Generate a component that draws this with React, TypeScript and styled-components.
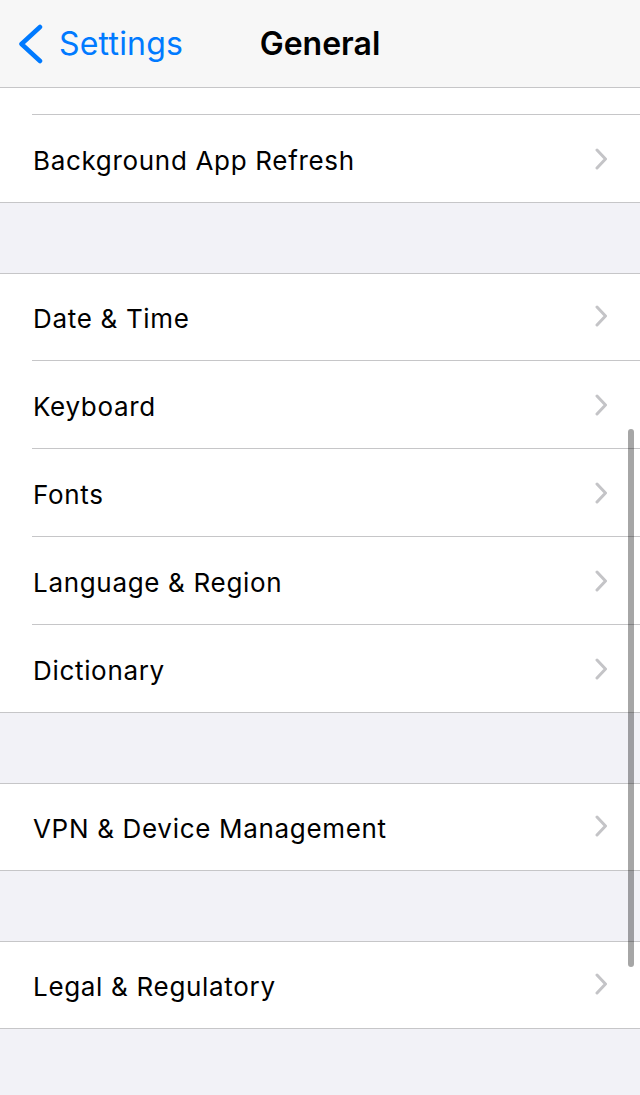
import React from "react";
import styled, { createGlobalStyle } from "styled-components";

const Global = createGlobalStyle`
  html, body { margin: 0; padding: 0; background: #f2f2f7; }
  body { font-family: Inter, "Open Sans", "Liberation Sans", sans-serif; -webkit-font-smoothing: antialiased; }
  * { box-sizing: border-box; }
`;

const Screen = styled.div`
  position: relative;
  width: 640px;
  height: 1095px;
  overflow: hidden;
  background: #f2f2f7;
  display: flex;
  flex-direction: column;
`;

const NavBar = styled.header`
  position: relative;
  height: 88px;
  flex: 0 0 88px;
  background: #f7f7f7;
  border-bottom: 1px solid #c6c6c8;
  display: flex;
  align-items: center;
`;

const BackButton = styled.div`
  display: flex;
  align-items: center;
  gap: 15px;
  padding-left: 17px;
  color: #007aff;
  font-size: 32px;
  letter-spacing: 0.2px;
`;

const Title = styled.h1`
  position: absolute;
  left: 0;
  right: 0;
  top: 0;
  bottom: 0;
  margin: 0;
  display: flex;
  align-items: center;
  justify-content: center;
  font-size: 32px;
  font-weight: 600;
  color: #000;
  pointer-events: none;
`;

const Group = styled.section<{ $gap: number }>`
  margin-top: ${(p) => p.$gap}px;
  background: #fff;
  border-top: 1px solid #c6c6c8;
  border-bottom: 1px solid #c6c6c8;
  display: flex;
  flex-direction: column;
`;

const FirstGroup = styled.section`
  background: #fff;
  border-bottom: 1px solid #c6c6c8;
  display: flex;
  flex-direction: column;
  padding-top: 26px;
`;

const Row = styled.div<{ $first?: boolean }>`
  height: ${(p) => (p.$first ? 86 : 88)}px;
  padding-left: 32px;
  display: flex;
`;

const RowInner = styled.div<{ $top?: boolean }>`
  flex: 1;
  display: flex;
  align-items: center;
  justify-content: space-between;
  padding: ${(p) => (p.$top ? 4 : 2)}px 32px 0 1px;
  border-top: ${(p) => (p.$top ? "1px solid #c6c6c8" : "none")};
`;

const Label = styled.span`
  font-size: 26px;
  color: #000;
  letter-spacing: 0.68px;
`;

const ChevronBox = styled.span`
  display: flex;
  margin-top: -4px;
`;

const ScrollBar = styled.div`
  position: absolute;
  right: 6px;
  top: 429px;
  width: 6px;
  height: 538px;
  border-radius: 3px;
  background: rgba(0, 0, 0, 0.35);
`;

const Chevron = () => (
  <ChevronBox>
    <svg width="14" height="22" viewBox="0 0 14 22">
      <path d="M3 2 L11.5 11 L3 20" fill="none" stroke="#c4c4c7" strokeWidth="3" strokeLinecap="round" strokeLinejoin="round" />
    </svg>
  </ChevronBox>
);

const BackChevron = () => (
  <svg width="27" height="40" viewBox="0 0 27 40">
    <path d="M23 3 L4.5 20 L23 37" fill="none" stroke="#007aff" strokeWidth="4.5" strokeLinecap="round" strokeLinejoin="round" />
  </svg>
);

const Item = ({ label, first }: { label: string; first?: boolean }) => (
  <Row $first={first}>
    <RowInner $top={!first}>
      <Label>{label}</Label>
      <Chevron />
    </RowInner>
  </Row>
);

export default function App() {
  return (
    <>
      <Global />
      <Screen>
        <NavBar>
          <BackButton>
            <BackChevron />
            <span>Settings</span>
          </BackButton>
          <Title>General</Title>
        </NavBar>
        <FirstGroup>
          <Item label="Background App Refresh" />
        </FirstGroup>
        <Group $gap={70}>
          <Item label="Date & Time" first />
          <Item label="Keyboard" />
          <Item label="Fonts" />
          <Item label="Language & Region" />
          <Item label="Dictionary" />
        </Group>
        <Group $gap={70}>
          <Item label="VPN & Device Management" first />
        </Group>
        <Group $gap={70}>
          <Item label="Legal & Regulatory" first />
        </Group>
        <ScrollBar />
      </Screen>
    </>
  );
}
